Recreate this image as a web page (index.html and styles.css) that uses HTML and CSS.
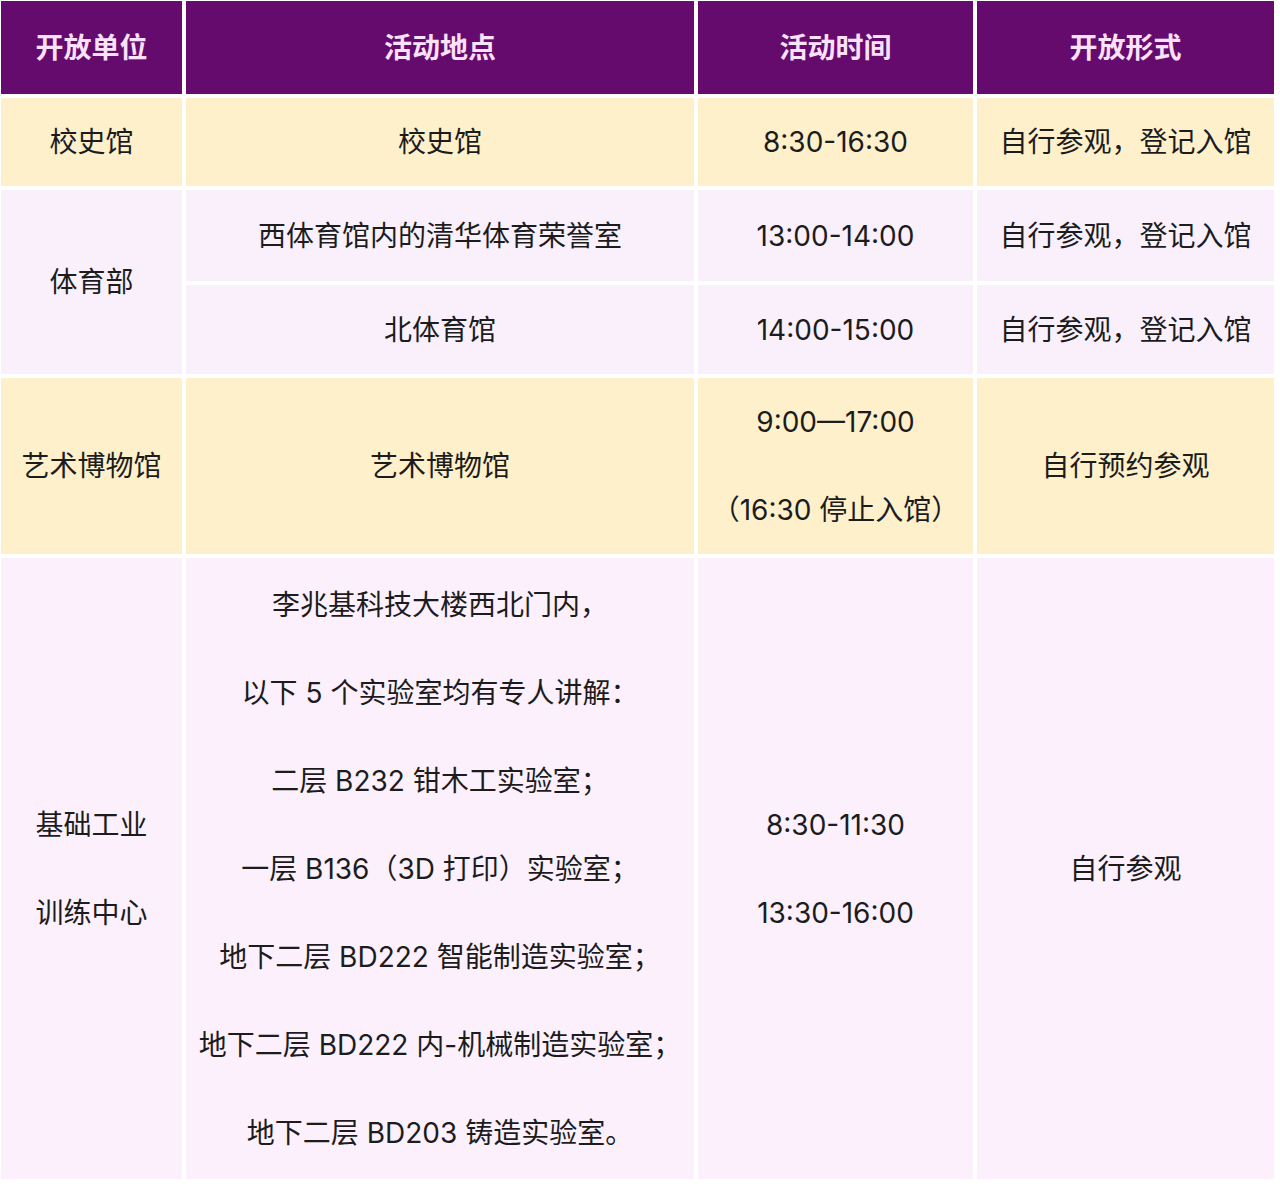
FILE: index.html
```html
<!DOCTYPE html>
<html lang="zh-CN">
<head>
<meta charset="utf-8">
<title>开放单位</title>
<link rel="stylesheet" href="styles.css">
</head>
<body>
<div class="table">
  <div class="cell head">开放单位</div>
  <div class="cell head">活动地点</div>
  <div class="cell head">活动时间</div>
  <div class="cell head">开放形式</div>

  <div class="cell yellow">校史馆</div>
  <div class="cell yellow">校史馆</div>
  <div class="cell yellow">8:30-16:30</div>
  <div class="cell yellow">自行参观，登记入馆</div>

  <div class="cell lav span2">体育部</div>
  <div class="cell lav">西体育馆内的清华体育荣誉室</div>
  <div class="cell lav">13:00-14:00</div>
  <div class="cell lav">自行参观，登记入馆</div>
  <div class="cell lav">北体育馆</div>
  <div class="cell lav">14:00-15:00</div>
  <div class="cell lav">自行参观，登记入馆</div>

  <div class="cell yellow">艺术博物馆</div>
  <div class="cell yellow">艺术博物馆</div>
  <div class="cell yellow tall"><p>9:00—17:00</p><p>（16:30 停止入馆）</p></div>
  <div class="cell yellow">自行预约参观</div>

  <div class="cell pink tall"><p>基础工业</p><p>训练中心</p></div>
  <div class="cell pink tall">
    <p>李兆基科技大楼西北门内，</p>
    <p>以下 5 个实验室均有专人讲解：</p>
    <p>二层 B232 钳木工实验室；</p>
    <p>一层 B136（3D 打印）实验室；</p>
    <p>地下二层 BD222 智能制造实验室；</p>
    <p>地下二层 BD222 内-机械制造实验室；</p>
    <p>地下二层 BD203 铸造实验室。</p>
  </div>
  <div class="cell pink tall"><p>8:30-11:30</p><p>13:30-16:00</p></div>
  <div class="cell pink">自行参观</div>
</div>
</body>
</html>
```

FILE: styles.css
```css
html, body {
  margin: 0;
  padding: 0;
  background: #ffffff;
}

body {
  font-family: Inter, "Noto Sans CJK SC", sans-serif;
  color: #1c1c1c;
}

.table {
  display: grid;
  grid-template-columns: 181px 508px 275px 297px;
  grid-template-rows: 93px 88px 91px 89px 176px 621px;
  gap: 4px;
  padding: 1px 0 0 1px;
  width: 1275px;
}

.cell {
  display: flex;
  flex-direction: column;
  align-items: center;
  justify-content: center;
  text-align: center;
  font-size: 28px;
  line-height: 40px;
  white-space: nowrap;
}

.cell p {
  margin: 0;
}

.tall {
  line-height: 88px;
}

.head {
  background: #660b6e;
  color: #fbe1f9;
  font-weight: bold;
}

.yellow {
  background: #fdf0cb;
}

.lav {
  background: #f9f0fc;
}

.pink {
  background: #fbf0fc;
}

.span2 {
  grid-row: span 2;
}
```
